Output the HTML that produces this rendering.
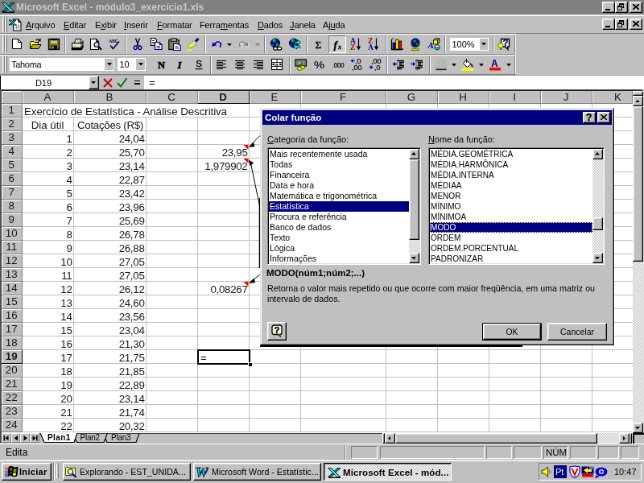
<!DOCTYPE html>
<html lang="pt-BR"><head><meta charset="utf-8"><title>Microsoft Excel - módulo3_exercício1.xls</title>
<style>
html,body{margin:0;padding:0;background:#c0c0c0;overflow:hidden}
body{width:644px;height:483px;position:relative}
#r{position:absolute;left:0;top:0;width:800px;height:600px;transform:scale(.805);transform-origin:0 0;will-change:transform;background:#c0c0c0;overflow:hidden;font:11px "Liberation Sans",sans-serif;color:#000}
#r div,#r span,#r svg{position:absolute;box-sizing:border-box;white-space:nowrap}
#r u{text-decoration:underline}
.t{line-height:13px;height:13px}
.b{font-weight:bold}
.rb{background:#c0c0c0;border:1px solid;border-color:#fff #000 #000 #fff;box-shadow:inset -1px -1px #808080,inset 1px 1px #dfdfdf}
.rb2{background:#c0c0c0;border:1px solid;border-color:#dfdfdf #000 #000 #dfdfdf;box-shadow:inset -1px -1px #808080,inset 1px 1px #fff}
.sk{border:1px solid;border-color:#808080 #fff #fff #808080;box-shadow:inset 1px 1px #000,inset -1px -1px #dfdfdf}
.sk1{border:1px solid;border-color:#808080 #fff #fff #808080}
.pr{background:#c0c0c0;border:1px solid;border-color:#000 #fff #fff #000;box-shadow:inset 1px 1px #808080,inset -1px -1px #dfdfdf}
.dz{background:repeating-conic-gradient(#fff 0 25%,#c0c0c0 0 50%) 0 0/2px 2px}
.vs{width:2px;background:#808080;border-right:1px solid #fff}
.gr{width:3px;border-left:1px solid #fff;border-right:1px solid #808080;background:#c0c0c0}
.hd{background:#c0c0c0;border-right:1px solid #808080;border-bottom:1px solid #808080;box-shadow:inset 1px 1px #fff;text-align:center;font-size:13.33px;line-height:16px;color:#181818}
.c{font-size:13.33px;line-height:17px;height:17px;color:#181818;margin-top:0.5px}
.cr{text-align:right;letter-spacing:-0.3px}
.li{left:1px;height:13px;line-height:13px;font-size:11.5px}
.sel{background:#000080;color:#fff}
</style></head>
<body>
<div id="r">
<div style="left:0px;top:0px;width:800px;height:18px;background:#808080"></div>
<svg style="left:2px;top:1px" width="16" height="16" viewBox="0 0 16 16"><path d="M12,2.5 L16,2.5 Q9,8 5,13.5 L0.5,13.5 Q7,8 12,2.5 Z" stroke="#000" stroke-width="0.8" fill="#009090" /><path d="M0.5,2.5 L5,2.5 Q9,8 16,13.5 L11.5,13.5 Q6,8 0.5,2.5 Z" stroke="#000" stroke-width="0.8" fill="#00d8d8" /><path d="M2.5,3.3 Q7,8 12.5,12.6" stroke="#c0ffff" stroke-width="0.9" fill="none" /><path d="M1,14.3 L16,14.3" stroke="#000" stroke-width="1.2" fill="none" /></svg>
<span class="t b" style="left:20px;top:2.5px;color:#c8c8c8;font-size:12px;letter-spacing:-0.04px">Microsoft Excel - módulo3_exercício1.xls</span>
<div class="rb" style="left:748px;top:2px;width:16px;height:14px;"><div style="left:3px;top:8px;width:6px;height:2px;background:#000"></div></div>
<div class="rb" style="left:764px;top:2px;width:16px;height:14px;"><div style="left:4px;top:1px;width:6px;height:6px;border:1px solid #000;border-top-width:2px"></div><div style="left:2px;top:4px;width:6px;height:6px;border:1px solid #000;border-top-width:2px;background:#c0c0c0"></div></div>
<div class="rb" style="left:782px;top:2px;width:16px;height:14px;"><svg style="left:3px;top:2px" width="8" height="7"><path d="M0,0 L8,7 M8,0 L0,7" stroke="#000" stroke-width="1.7" fill="none"/></svg></div>
<div style="left:0px;top:18px;width:800px;height:1px;background:#dfdfdf"></div>
<div style="left:0px;top:19px;width:800px;height:1px;background:#fff"></div>
<div class="gr" style="left:3px;top:21px;width:3px;height:19px;"></div>
<div class="gr" style="left:6px;top:21px;width:3px;height:19px;"></div>
<svg style="left:11px;top:23px" width="16" height="16" viewBox="0 0 16 16"><path d="M5.5,1 L11.5,1 L15,4.5 L15,15 L5.5,15 Z" stroke="#000" stroke-width="1.1" fill="#fff" /><path d="M11.5,1 L11.5,4.5 L15,4.5" stroke="#000" stroke-width="1" fill="none" /><path d="M7,9 H13.5 M7,11.5 H13.5 M9.5,7 V13.5 M12,7 V13.5" stroke="#909090" stroke-width="0.9" fill="none" /><path d="M15.6,5 V15.6 H6.5" stroke="#606060" stroke-width="0.9" fill="none" /><path d="M5.8,2 L9,2 Q5.5,5 3.2,8 L0,8 Q3.5,5 5.8,2 Z" stroke="#000" stroke-width="0.7" fill="#009090" /><path d="M0,2 L3.2,2 Q5.5,5 9,8 L5.8,8 Q3.5,5 0,2 Z" stroke="#000" stroke-width="0.7" fill="#00d8d8" /></svg>
<span class="t" style="left:32px;top:25px;letter-spacing:-0.12px"><u>A</u>rquivo</span>
<span class="t" style="left:79px;top:25px;letter-spacing:-0.12px"><u>E</u>ditar</span>
<span class="t" style="left:118px;top:25px;letter-spacing:-0.12px">E<u>x</u>ibir</span>
<span class="t" style="left:154px;top:25px;letter-spacing:-0.12px"><u>I</u>nserir</span>
<span class="t" style="left:195px;top:25px;letter-spacing:-0.12px"><u>F</u>ormatar</span>
<span class="t" style="left:248px;top:25px;letter-spacing:-0.12px">Ferra<u>m</u>entas</span>
<span class="t" style="left:320px;top:25px;letter-spacing:-0.12px"><u>D</u>ados</span>
<span class="t" style="left:360px;top:25px;letter-spacing:-0.12px"><u>J</u>anela</span>
<span class="t" style="left:401px;top:25px;letter-spacing:-0.12px">Aj<u>u</u>da</span>
<div class="rb" style="left:748px;top:23px;width:16px;height:14px;"><div style="left:3px;top:8px;width:6px;height:2px;background:#000"></div></div>
<div class="rb" style="left:764px;top:23px;width:16px;height:14px;"><div style="left:4px;top:1px;width:6px;height:6px;border:1px solid #000;border-top-width:2px"></div><div style="left:2px;top:4px;width:6px;height:6px;border:1px solid #000;border-top-width:2px;background:#c0c0c0"></div></div>
<div class="rb" style="left:782px;top:23px;width:16px;height:14px;"><svg style="left:3px;top:2px" width="8" height="7"><path d="M0,0 L8,7 M8,0 L0,7" stroke="#000" stroke-width="1.7" fill="none"/></svg></div>
<div style="left:0px;top:41px;width:800px;height:1px;background:#808080"></div>
<div style="left:0px;top:42px;width:641px;height:1px;background:#fff"></div>
<div class="gr" style="left:3px;top:44px;width:3px;height:21px;"></div>
<div class="gr" style="left:6px;top:44px;width:3px;height:21px;"></div>
<svg style="left:13px;top:47px" width="16" height="16" viewBox="0 0 16 16"><path d="M2.5,1.5 L9.5,1.5 L13.5,5.5 L13.5,13.5 L2.5,13.5 Z" stroke="#000" stroke-width="1" fill="#fff" /><path d="M9.5,1.5 L9.5,5.5 L13.5,5.5" stroke="#000" stroke-width="1" fill="none" /></svg>
<svg style="left:36px;top:47px" width="16" height="16" viewBox="0 0 16 16"><path d="M1.5,13.5 L1.5,5.5 L2.5,4.5 L5.5,4.5 L6.5,5.5 L11.5,5.5 L11.5,8.5" stroke="#000" stroke-width="1" fill="#ffff30" /><path d="M1.5,13.5 L4.5,8.5 L15,8.5 L12,13.5 Z" stroke="#000" stroke-width="1" fill="#b0b000" /><path d="M8.5,3 Q11,0.5 13.5,3 M14,0.8 L14,4 L10.8,4" stroke="#000" stroke-width="1.1" fill="none" /></svg>
<svg style="left:59px;top:47px" width="16" height="16" viewBox="0 0 16 16"><rect x="1.5" y="1.5" width="13" height="13" fill="#808000" stroke="#000" stroke-width="1.4"/><rect x="4" y="2" width="8" height="5" fill="#c0c0b0"/><rect x="4" y="2" width="8" height="1.2" fill="#000"/><rect x="4.5" y="9.5" width="7.5" height="5" fill="#000"/><rect x="5.5" y="10.5" width="2.2" height="3" fill="#b0b090"/></svg>
<svg style="left:88px;top:47px" width="16" height="16" viewBox="0 0 16 16"><path d="M4.5,6.5 L6,1.5 L13,1.5 L11.5,6.5 Z" stroke="#000" stroke-width="1" fill="#fff" /><path d="M7,3.2 H11.5 M6.5,4.8 H11" stroke="#808080" stroke-width="0.7" fill="none" /><path d="M1.5,6.5 L13,6.5 L15,4.5 L15,9.5 L13,12.5 L1.5,12.5 Z" stroke="#000" stroke-width="1.1" fill="#c8c8c8" /><path d="M13,6.5 L13,12.5" stroke="#000" stroke-width="1" fill="none" /><path d="M1.5,9 H13" stroke="#fff" stroke-width="0.8" fill="none" /><rect x="8.5" y="9.8" width="3" height="1.4" fill="#ffff00"/><path d="M1,12.8 L13.5,12.8 L15.5,10 L15.5,11.5 L13.5,15 L1,15 Z" stroke="#000" stroke-width="0.6" fill="#000" /></svg>
<svg style="left:111px;top:47px" width="16" height="16" viewBox="0 0 16 16"><path d="M1.5,1.5 L8.5,1.5 L11.5,4.5 L11.5,14.5 L1.5,14.5 Z" stroke="#000" stroke-width="1.1" fill="#fff" /><path d="M8.5,1.5 L8.5,4.5 L11.5,4.5" stroke="#000" stroke-width="1" fill="none" /><circle cx="9" cy="8.5" r="3" fill="#a0e8f0" stroke="#000" stroke-width="1.1"/><path d="M11.2,10.8 L15,14.8" stroke="#000" stroke-width="2.2" fill="none" /></svg>
<svg style="left:134px;top:47px" width="16" height="16" viewBox="0 0 16 16"><text x="1.5" y="6" font-family="Liberation Sans,sans-serif" font-size="6" font-weight="bold" fill="#000" textLength="11" lengthAdjust="spacingAndGlyphs">ABC</text><path d="M3,9.5 L6.5,13.5 L14,4.5" stroke="#000080" stroke-width="1.7" fill="none" /></svg>
<svg style="left:163px;top:47px" width="16" height="16" viewBox="0 0 16 16"><path d="M5.5,0.5 L9,10 M10.5,0.5 L7,10" stroke="#000" stroke-width="1.3" fill="none" /><ellipse cx="5.2" cy="12.3" rx="1.9" ry="2.3" fill="none" stroke="#0000a0" stroke-width="1.4"/><ellipse cx="10.8" cy="12.3" rx="1.9" ry="2.3" fill="none" stroke="#0000a0" stroke-width="1.4"/></svg>
<svg style="left:186px;top:47px" width="16" height="16" viewBox="0 0 16 16"><path d="M1.5,0.5 L6.5,0.5 L8.5,2.5 L8.5,9.5 L1.5,9.5 Z" stroke="#000" stroke-width="1.1" fill="#fff" /><path d="M3,3.5 H6 M3,5.5 H7 M3,7.5 H7" stroke="#000" stroke-width="0.8" fill="none" /><path d="M6.5,5.5 L12,5.5 L15,8.5 L15,14.5 L6.5,14.5 Z" stroke="#000080" stroke-width="1.2" fill="#fff" /><path d="M12,5.5 L12,8.5 L15,8.5" stroke="#000080" stroke-width="1" fill="none" /><path d="M8.5,10.5 H13 M8.5,12.5 H13" stroke="#000080" stroke-width="0.9" fill="none" /></svg>
<svg style="left:209px;top:47px" width="16" height="16" viewBox="0 0 16 16"><rect x="0.8" y="2.5" width="12.4" height="12" fill="#808050" stroke="#000" stroke-width="1.2"/><rect x="3.5" y="1" width="7" height="3.2" fill="#c0c0c0" stroke="#000" stroke-width="1"/><rect x="5.5" y="0.2" width="3" height="1.5" fill="#404040"/><path d="M6.5,7.5 L12,7.5 L15.3,10 L15.3,15.5 L6.5,15.5 Z" stroke="#000080" stroke-width="1.2" fill="#fff" /><path d="M8.5,11 H12 M8.5,13 H13.5" stroke="#000080" stroke-width="0.9" fill="none" /></svg>
<svg style="left:232px;top:47px" width="16" height="16" viewBox="0 0 16 16"><path d="M11,4.5 L14.5,0.8" stroke="#000060" stroke-width="3" fill="none" /><path d="M8,3.5 L12.5,8 L10.5,9.5 L6.5,5.5 Z" stroke="#606060" stroke-width="0.8" fill="#fff" /><path d="M6.5,5.5 L10.5,9.5 L4,13 L1.5,10 Z" stroke="#808000" stroke-width="0.7" fill="#ffff40" /><path d="M3.5,9.5 L6,12 M5,8 L8,11" stroke="#c0c000" stroke-width="0.7" fill="none" /><path d="M1,15 H6" stroke="#ffff00" stroke-width="1.4" fill="none" /></svg>
<svg style="left:261px;top:47px" width="16" height="16" viewBox="0 0 16 16"><path d="M5.5,8.5 Q7,4.8 10,5 Q13.5,5.5 13.3,8.5 Q13.2,10.5 12,11.5" stroke="#0000c0" stroke-width="1.7" fill="none" /><polygon points="2,10.8 3.5,5.2 8.2,9.2" fill="#0000c0"/></svg>
<svg style="left:295px;top:47px" width="16" height="16" viewBox="0 0 16 16"><path d="M11.5,9.5 Q10,5.8 7,6 Q3.5,6.5 3.7,9.5 Q3.8,11.5 5,12.5" stroke="#fff" stroke-width="1.7" fill="none" /><polygon points="15,11.8 13.5,6.2 8.8,10.2" fill="#fff"/><path d="M10.5,8.5 Q9,4.8 6,5 Q2.5,5.5 2.7,8.5 Q2.8,10.5 4,11.5" stroke="#808080" stroke-width="1.7" fill="none" /><polygon points="14,10.8 12.5,5.2 7.8,9.2" fill="#808080"/></svg>
<svg style="left:335px;top:47px" width="16" height="16" viewBox="0 0 16 16"><circle cx="7" cy="6.5" r="5.6" fill="#0000c0" stroke="#000" stroke-width="0.9"/><path d="M4,2.5 Q7,1 8.5,3 Q7,5.5 5,6 Q3,5.5 4,2.5 Z M7.5,7 Q10.5,6 11.5,8 Q10,11.5 8,11 Z M2,7.5 Q4,7.5 4.5,10 Q3,10.5 2,7.5 Z" stroke="none" stroke-width="0" fill="#00b000" /><path d="M3.5,3 Q5,1.8 6.5,2" stroke="#80c0ff" stroke-width="0.8" fill="none" /><ellipse cx="7.5" cy="13.2" rx="2.8" ry="1.9" fill="#fff" stroke="#000" stroke-width="1.2"/><ellipse cx="12" cy="13.2" rx="2.8" ry="1.9" fill="#fff" stroke="#000" stroke-width="1.2"/></svg>
<svg style="left:358px;top:47px" width="16" height="16" viewBox="0 0 16 16"><circle cx="7" cy="6.5" r="5.6" fill="#0000c0" stroke="#000" stroke-width="0.9"/><path d="M4,2.5 Q7,1 8.5,3 Q7,5.5 5,6 Q3,5.5 4,2.5 Z M7.5,7 Q10.5,6 11.5,8 Q10,11.5 8,11 Z M2,7.5 Q4,7.5 4.5,10 Q3,10.5 2,7.5 Z" stroke="none" stroke-width="0" fill="#00b000" /><path d="M3.5,3 Q5,1.8 6.5,2" stroke="#80c0ff" stroke-width="0.8" fill="none" /><polygon points="16,5.5 12,2.5 12,4.3 8.5,4.3 8.5,6.7 12,6.7 12,8.5" fill="#00ffff" stroke="#000" stroke-width="0.7"/><polygon points="6.5,11 10.5,8 10.5,9.8 14.5,9.8 14.5,12.2 10.5,12.2 10.5,14" fill="#00ffff" stroke="#000" stroke-width="0.7"/></svg>
<svg style="left:388px;top:47px" width="16" height="16" viewBox="0 0 16 16"><text x="3.5" y="13" font-family="Liberation Serif,sans-serif" font-size="13.5" font-weight="normal" fill="#000" stroke="#000" stroke-width="0.3">Σ</text></svg>
<svg style="left:434px;top:47px" width="16" height="16" viewBox="0 0 16 16"><text x="1" y="7.2" font-family="Liberation Serif,sans-serif" font-size="9.5" font-weight="bold" fill="#0000a0" >A</text><text x="1" y="15.2" font-family="Liberation Serif,sans-serif" font-size="9.5" font-weight="bold" fill="#b00000" >Z</text><path d="M11.5,0.5 V13" stroke="#000" stroke-width="1.2" fill="none" /><polygon points="8.7,10.5 14.3,10.5 11.5,15.5" fill="#000"/></svg>
<svg style="left:456px;top:47px" width="16" height="16" viewBox="0 0 16 16"><text x="1" y="7.2" font-family="Liberation Serif,sans-serif" font-size="9.5" font-weight="bold" fill="#b00000" >Z</text><text x="1" y="15.2" font-family="Liberation Serif,sans-serif" font-size="9.5" font-weight="bold" fill="#0000a0" >A</text><path d="M11.5,0.5 V13" stroke="#000" stroke-width="1.2" fill="none" /><polygon points="8.7,10.5 14.3,10.5 11.5,15.5" fill="#000"/></svg>
<svg style="left:485px;top:47px" width="16" height="16" viewBox="0 0 16 16"><path d="M1.5,2 V14.5 H15.5" stroke="#000" stroke-width="1.2" fill="none" /><path d="M1.5,2 L3.5,0.8 M15.5,14.5 L15.5,13" stroke="#000" stroke-width="1" fill="none" /><rect x="3" y="6" width="3.2" height="8" fill="#0000ff" stroke="#000" stroke-width="0.8"/><rect x="6.7" y="2" width="3.2" height="12" fill="#ffff00" stroke="#000" stroke-width="0.8"/><rect x="10.5" y="4" width="3.2" height="10" fill="#ff0000" stroke="#000" stroke-width="0.8"/><path d="M1,15.5 H14" stroke="#808080" stroke-width="1" fill="none" /></svg>
<svg style="left:508px;top:47px" width="16" height="16" viewBox="0 0 16 16"><circle cx="8" cy="6" r="5.2" fill="#0000c0" stroke="#000" stroke-width="0.8"/><path d="M5.5,3 Q8,1.5 9.5,3.5 Q8,5.5 6,6 Q4.5,5 5.5,3 Z M8.5,6.5 Q11,6 12,7.5 Q10.5,10 9,9.5 Z" stroke="none" stroke-width="0" fill="#00a000" /><path d="M2.5,5 Q2,12 8,12 Q14,12 13.5,5" stroke="#808000" stroke-width="1.3" fill="none" /><rect x="7" y="12" width="2" height="2.2" fill="#808000"/><rect x="3.8" y="13.8" width="8.4" height="1.8" fill="#e8e800" stroke="#606000" stroke-width="0.8"/></svg>
<svg style="left:531px;top:47px" width="16" height="16" viewBox="0 0 16 16"><text x="0.5" y="13" font-family="Liberation Serif,sans-serif" font-size="11" font-weight="bold" fill="#000080" font-style="italic">A</text><path d="M7.5,2.8 L12.5,2.8 L12.5,8 L7.5,8 Z" stroke="#000" stroke-width="0.9" fill="#ffff00" /><path d="M7.5,2.8 L9.5,0.8 L14.8,0.8 L12.5,2.8 M14.8,0.8 L14.8,6 L12.5,8" stroke="#000" stroke-width="0.9" fill="#a0a000" /><path d="M9,10.5 L9,13.5 Q12,16.5 15,13.5 L15,10.5 Z" stroke="#000" stroke-width="0.8" fill="#00e0e0" /><ellipse cx="12" cy="10.5" rx="3" ry="1.6" fill="#e0ffff" stroke="#000" stroke-width="0.8"/></svg>
<div class="vs" style="left:80px;top:44px;width:2px;height:22px;"></div>
<div class="vs" style="left:155px;top:44px;width:2px;height:22px;"></div>
<div class="vs" style="left:254px;top:44px;width:2px;height:22px;"></div>
<div class="vs" style="left:328px;top:44px;width:2px;height:22px;"></div>
<div class="vs" style="left:380px;top:44px;width:2px;height:22px;"></div>
<div class="vs" style="left:479px;top:44px;width:2px;height:22px;"></div>
<div class="vs" style="left:552px;top:44px;width:2px;height:22px;"></div>
<div class="vs" style="left:612px;top:44px;width:2px;height:22px;"></div>
<svg style="left:281.5px;top:53.5px" width="6.0" height="3.5"><polygon points="0,0 6.0,0 3.0,3.5" fill="#000"/></svg>
<svg style="left:316.5px;top:53.5px" width="6.0" height="3.5"><polygon points="0,0 6.0,0 3.0,3.5" fill="#808080"/></svg>
<div style="left:408px;top:44px;width:22px;height:22px;background:#d0d0d0;border:1px solid;border-color:#808080 #fff #fff #808080"></div>
<svg style="left:412px;top:48px" width="16" height="16" viewBox="0 0 16 16"><text x="2.5" y="12" font-family="Liberation Serif,sans-serif" font-size="13.5" font-weight="bold" fill="#000" font-style="italic" stroke="#000" stroke-width="0.3">f</text><text x="8" y="12.5" font-family="Liberation Serif,sans-serif" font-size="8.5" font-weight="bold" fill="#000" font-style="italic" stroke="#000" stroke-width="0.3">x</text></svg>
<div style="left:559px;top:47px;width:47.5px;height:16px;background:#fff"></div>
<span class="t" style="left:561.5px;top:48.5px;">100%</span>
<div style="left:595.5px;top:48px;width:10px;height:14px;background:#c0c0c0"></div>
<svg style="left:597.5px;top:53px" width="6.0" height="3.5"><polygon points="0,0 6.0,0 3.0,3.5" fill="#000"/></svg>
<svg style="left:618px;top:47px" width="16" height="16" viewBox="0 0 16 16"><path d="M4.5,1.5 L14.5,1.5 L14.5,11 L12.5,11 L13,14.5 L9.5,11 L4.5,11 Z" stroke="#000" stroke-width="1.4" fill="#ffffd0" /><text x="6.5" y="10.2" font-family="Liberation Sans,sans-serif" font-size="11.5" font-weight="bold" fill="#0000c0" stroke="#0000c0" stroke-width="0.4">?</text><circle cx="4" cy="9.5" r="3" fill="#ffff00" stroke="#606000" stroke-width="0.9"/><rect x="3" y="12.3" width="2.4" height="2.7" fill="#606060"/></svg>
<div style="left:638.5px;top:43px;width:1px;height:25px;background:#808080"></div>
<div style="left:639.5px;top:43px;width:1px;height:25px;background:#fff"></div>
<div style="left:0px;top:67px;width:640px;height:1px;background:#808080"></div>
<div style="left:0px;top:68px;width:640px;height:1px;background:#fff"></div>
<div class="gr" style="left:3px;top:70px;width:3px;height:21px;"></div>
<div class="gr" style="left:6px;top:70px;width:3px;height:21px;"></div>
<div style="left:11.5px;top:72px;width:130.5px;height:16px;background:#fff"></div>
<span class="t" style="left:14px;top:73.5px;letter-spacing:-0.3px">Tahoma</span>
<div style="left:130px;top:73px;width:11px;height:14px;background:#c0c0c0"></div>
<svg style="left:132.5px;top:78px" width="6.0" height="3.5"><polygon points="0,0 6.0,0 3.0,3.5" fill="#000"/></svg>
<div style="left:146px;top:72px;width:35px;height:16px;background:#fff"></div>
<span class="t" style="left:148.5px;top:73.5px;">10</span>
<div style="left:169px;top:73px;width:11px;height:14px;background:#c0c0c0"></div>
<svg style="left:171.5px;top:78px" width="6.0" height="3.5"><polygon points="0,0 6.0,0 3.0,3.5" fill="#000"/></svg>
<svg style="left:193px;top:71.5px" width="16" height="16" viewBox="0 0 16 16"><text x="3" y="13" font-family="Liberation Serif,sans-serif" font-size="12.5" font-weight="bold" fill="#000" stroke="#000" stroke-width="0.7">N</text></svg>
<svg style="left:216px;top:71.5px" width="16" height="16" viewBox="0 0 16 16"><text x="4.5" y="13" font-family="Liberation Serif,sans-serif" font-size="13" font-weight="bold" fill="#000" font-style="italic" stroke="#000" stroke-width="0.5">I</text></svg>
<svg style="left:239px;top:71.5px" width="16" height="16" viewBox="0 0 16 16"><text x="4.3" y="11.3" font-family="Liberation Sans,sans-serif" font-size="11.5" font-weight="normal" fill="#000" stroke="#000" stroke-width="0.35">S</text><path d="M3.5,13.6 H12.5" stroke="#000" stroke-width="1.2" fill="none" /></svg>
<svg style="left:267px;top:71.5px" width="16" height="16" viewBox="0 0 16 16"><path d="M2,3.5 H14" stroke="#000" stroke-width="1.1" fill="none" /><path d="M2,5.5 H10" stroke="#000" stroke-width="1.1" fill="none" /><path d="M2,7.5 H14" stroke="#000" stroke-width="1.1" fill="none" /><path d="M2,9.5 H10" stroke="#000" stroke-width="1.1" fill="none" /><path d="M2,11.5 H14" stroke="#000" stroke-width="1.1" fill="none" /><path d="M2,13.5 H10" stroke="#000" stroke-width="1.1" fill="none" /></svg>
<svg style="left:290px;top:71.5px" width="16" height="16" viewBox="0 0 16 16"><path d="M2,3.5 H14" stroke="#000" stroke-width="1.1" fill="none" /><path d="M4,5.5 H12" stroke="#000" stroke-width="1.1" fill="none" /><path d="M2,7.5 H14" stroke="#000" stroke-width="1.1" fill="none" /><path d="M4,9.5 H12" stroke="#000" stroke-width="1.1" fill="none" /><path d="M2,11.5 H14" stroke="#000" stroke-width="1.1" fill="none" /><path d="M4,13.5 H12" stroke="#000" stroke-width="1.1" fill="none" /></svg>
<svg style="left:313px;top:71.5px" width="16" height="16" viewBox="0 0 16 16"><path d="M2,3.5 H14" stroke="#000" stroke-width="1.1" fill="none" /><path d="M6,5.5 H14" stroke="#000" stroke-width="1.1" fill="none" /><path d="M2,7.5 H14" stroke="#000" stroke-width="1.1" fill="none" /><path d="M6,9.5 H14" stroke="#000" stroke-width="1.1" fill="none" /><path d="M2,11.5 H14" stroke="#000" stroke-width="1.1" fill="none" /><path d="M6,13.5 H14" stroke="#000" stroke-width="1.1" fill="none" /></svg>
<svg style="left:336px;top:71.5px" width="16" height="16" viewBox="0 0 16 16"><rect x="1.5" y="1.5" width="13" height="13" fill="#fff" stroke="#000" stroke-width="1.1"/><path d="M1.5,5.5 H14.5 M1.5,10.5 H14.5 M8,1.5 V5.5 M8,10.5 V14.5" stroke="#000" stroke-width="0.9" fill="none" /><text x="6" y="10" font-family="Liberation Sans,sans-serif" font-size="6" font-weight="bold" fill="#000" >a</text><path d="M2.5,8 H5.5 M10.5,8 H13.5" stroke="#000" stroke-width="1" fill="none" /><polygon points="2,8 4.5,6.2 4.5,9.8" fill="#000"/><polygon points="14,8 11.5,6.2 11.5,9.8" fill="#000"/></svg>
<svg style="left:366px;top:71.5px" width="16" height="16" viewBox="0 0 16 16"><rect x="1" y="2" width="13.5" height="8" fill="#609070" stroke="#000" stroke-width="1.2"/><ellipse cx="7.8" cy="6" rx="3.6" ry="3" fill="#f0fff0" stroke="#104020" stroke-width="0.6"/><text x="5.8" y="8.8" font-family="Liberation Sans,sans-serif" font-size="8" font-weight="bold" fill="#000" >9</text><ellipse cx="9.8" cy="11.6" rx="3.1" ry="2.1" fill="#f0f000" stroke="#404000" stroke-width="0.9"/><ellipse cx="6.2" cy="13.2" rx="3.1" ry="2.1" fill="#f0f000" stroke="#404000" stroke-width="0.9"/></svg>
<svg style="left:389px;top:71.5px" width="16" height="16" viewBox="0 0 16 16"><text x="1" y="13" font-family="Liberation Sans,sans-serif" font-size="13.5" font-weight="normal" fill="#000" textLength="13" lengthAdjust="spacingAndGlyphs" stroke="#000" stroke-width="0.15">%</text></svg>
<svg style="left:412px;top:71.5px" width="16" height="16" viewBox="0 0 16 16"><text x="0.5" y="12" font-family="Liberation Sans,sans-serif" font-size="9" font-weight="normal" fill="#000" textLength="15" lengthAdjust="spacingAndGlyphs" stroke="#000" stroke-width="0.25">.000</text></svg>
<svg style="left:435px;top:71.5px" width="16" height="16" viewBox="0 0 16 16"><text x="6" y="7.2" font-family="Liberation Sans,sans-serif" font-size="9" font-weight="normal" fill="#000" stroke="#000" stroke-width="0.2">,0</text><text x="2" y="15.2" font-family="Liberation Sans,sans-serif" font-size="9" font-weight="normal" fill="#000" textLength="12.5" lengthAdjust="spacingAndGlyphs" stroke="#000" stroke-width="0.2">,00</text><path d="M2.5,3.5 H5.5" stroke="#0000c0" stroke-width="1.2" fill="none" /><polygon points="0.5,3.5 3.5,1 3.5,6" fill="#0000c0"/></svg>
<svg style="left:458px;top:71.5px" width="16" height="16" viewBox="0 0 16 16"><text x="3" y="7.2" font-family="Liberation Sans,sans-serif" font-size="9" font-weight="normal" fill="#000" textLength="12.5" lengthAdjust="spacingAndGlyphs" stroke="#000" stroke-width="0.2">,00</text><text x="7" y="15.2" font-family="Liberation Sans,sans-serif" font-size="9" font-weight="normal" fill="#000" stroke="#000" stroke-width="0.2">,0</text><path d="M0.5,11.5 H3.5" stroke="#0000c0" stroke-width="1.2" fill="none" /><polygon points="5.5,11.5 2.5,9 2.5,14" fill="#0000c0"/></svg>
<svg style="left:487px;top:71.5px" width="16" height="16" viewBox="0 0 16 16"><path d="M6,3.5 H15 M9,5.5 H15 M9,7.5 H13 M9,9.5 H15 M6,11.5 H15 M6,13.5 H12" stroke="#000" stroke-width="1.35" fill="none" /><path d="M7.5,1 V15.5" stroke="#404040" stroke-width="0.7" fill="none" stroke-dasharray="1 1"/><path d="M3,7.5 H6.5" stroke="#0000c0" stroke-width="1.4" fill="none" /><polygon points="0.5,7.5 4,4.8 4,10.2" fill="#0000c0"/></svg>
<svg style="left:510px;top:71.5px" width="16" height="16" viewBox="0 0 16 16"><path d="M6,3.5 H15 M9,5.5 H15 M9,7.5 H13 M9,9.5 H15 M6,11.5 H15 M6,13.5 H12" stroke="#000" stroke-width="1.35" fill="none" /><path d="M7.5,1 V15.5" stroke="#404040" stroke-width="0.7" fill="none" stroke-dasharray="1 1"/><path d="M0.5,7.5 H4" stroke="#0000c0" stroke-width="1.4" fill="none" /><polygon points="6.5,7.5 3,4.8 3,10.2" fill="#0000c0"/></svg>
<svg style="left:540px;top:71.5px" width="16" height="16" viewBox="0 0 16 16"><path d="M2,2 H14 M2,6 H14 M2,10 H14 M2,2 V13 M6,2 V13 M10,2 V13 M14,2 V13" stroke="#909090" stroke-width="0.8" fill="none" stroke-dasharray="1 1"/><path d="M1.5,14.3 H14.5" stroke="#202020" stroke-width="1.7" fill="none" /></svg>
<svg style="left:573px;top:71.5px" width="16" height="16" viewBox="0 0 16 16"><path d="M6,2.5 L12,7.5 L7.5,11.5 L2.5,6.5 Z" stroke="#000" stroke-width="1" fill="#fff" /><path d="M6.5,1 V6" stroke="#000" stroke-width="1" fill="none" /><path d="M12,7.5 Q14.5,8 14,11.5 Q12.5,10 12,7.5 Z" stroke="#000080" stroke-width="0.8" fill="#0000c0" /><rect x="1" y="12.5" width="14" height="3.5" fill="#ffff00"/></svg>
<svg style="left:607px;top:71.5px" width="16" height="16" viewBox="0 0 16 16"><text x="3" y="10.5" font-family="Liberation Sans,sans-serif" font-size="12" font-weight="bold" fill="#000080" >A</text><rect x="1" y="12" width="14" height="3.5" fill="#ff0000"/></svg>
<div class="vs" style="left:261px;top:69.5px;width:2px;height:22px;"></div>
<div class="vs" style="left:359px;top:69.5px;width:2px;height:22px;"></div>
<div class="vs" style="left:480px;top:69.5px;width:2px;height:22px;"></div>
<div class="vs" style="left:533px;top:69.5px;width:2px;height:22px;"></div>
<svg style="left:560.5px;top:79px" width="6.0" height="3.5"><polygon points="0,0 6.0,0 3.0,3.5" fill="#000"/></svg>
<svg style="left:594.5px;top:79px" width="6.0" height="3.5"><polygon points="0,0 6.0,0 3.0,3.5" fill="#000"/></svg>
<svg style="left:628.5px;top:79px" width="6.0" height="3.5"><polygon points="0,0 6.0,0 3.0,3.5" fill="#000"/></svg>
<div style="left:638.5px;top:69px;width:1px;height:24px;background:#808080"></div>
<div style="left:639.5px;top:69px;width:1px;height:24px;background:#fff"></div>
<div style="left:0px;top:92px;width:641px;height:1px;background:#808080"></div>
<div style="left:0px;top:93px;width:800px;height:1px;background:#a0a0a0"></div>
<div style="left:0px;top:94px;width:122px;height:17px;background:#fff;border-left:1.5px solid #000"></div>
<span class="t" style="left:1px;top:96.5px;width:106px;text-align:center">D19</span>
<div class="rb" style="left:109.5px;top:94px;width:13px;height:17px;"></div>
<svg style="left:113px;top:101px" width="6.0" height="3.5"><polygon points="0,0 6.0,0 3.0,3.5" fill="#000"/></svg>
<svg style="left:128px;top:97px" width="12" height="12"><path d="M1,1 L11,11 M11,1 L1,11" stroke="#b00000" stroke-width="1.9" fill="none"/></svg>
<svg style="left:145px;top:96px" width="14" height="13"><path d="M1,7 L5,11.5 L12.5,1" stroke="#008000" stroke-width="1.9" fill="none"/></svg>
<div style="left:166.5px;top:99.5px;width:7.5px;height:1.7px;background:#000"></div>
<div style="left:166.5px;top:103px;width:7.5px;height:1.7px;background:#000"></div>
<div style="left:178.5px;top:94px;width:622px;height:17px;background:#fff"></div>
<span class="t" style="left:185px;top:95px;font-size:13.33px;line-height:15px">=</span>
<div style="left:0px;top:111px;width:798px;height:2px;background:#202020;border-top:1px solid #505050"></div>
<div style="left:0px;top:113px;width:786px;height:425px;background:#fff"></div>
<div style="left:0px;top:112px;width:2px;height:438.5px;background:#505050"></div>
<div style="left:90.5px;top:129px;width:1px;height:408px;background:#c0c0c0"></div>
<div style="left:180.5px;top:129px;width:1px;height:408px;background:#c0c0c0"></div>
<div style="left:244.5px;top:129px;width:1px;height:408px;background:#c0c0c0"></div>
<div style="left:308.5px;top:129px;width:1px;height:408px;background:#c0c0c0"></div>
<div style="left:372.5px;top:129px;width:1px;height:408px;background:#c0c0c0"></div>
<div style="left:478.5px;top:129px;width:1px;height:408px;background:#c0c0c0"></div>
<div style="left:542.5px;top:129px;width:1px;height:408px;background:#c0c0c0"></div>
<div style="left:606.5px;top:129px;width:1px;height:408px;background:#c0c0c0"></div>
<div style="left:670.5px;top:129px;width:1px;height:408px;background:#c0c0c0"></div>
<div style="left:734.5px;top:129px;width:1px;height:408px;background:#c0c0c0"></div>
<div style="left:27.5px;top:145px;width:758.5px;height:1px;background:#c0c0c0"></div>
<div style="left:27.5px;top:162px;width:758.5px;height:1px;background:#c0c0c0"></div>
<div style="left:27.5px;top:179px;width:758.5px;height:1px;background:#c0c0c0"></div>
<div style="left:27.5px;top:196px;width:758.5px;height:1px;background:#c0c0c0"></div>
<div style="left:27.5px;top:213px;width:758.5px;height:1px;background:#c0c0c0"></div>
<div style="left:27.5px;top:230px;width:758.5px;height:1px;background:#c0c0c0"></div>
<div style="left:27.5px;top:247px;width:758.5px;height:1px;background:#c0c0c0"></div>
<div style="left:27.5px;top:264px;width:758.5px;height:1px;background:#c0c0c0"></div>
<div style="left:27.5px;top:281px;width:758.5px;height:1px;background:#c0c0c0"></div>
<div style="left:27.5px;top:298px;width:758.5px;height:1px;background:#c0c0c0"></div>
<div style="left:27.5px;top:315px;width:758.5px;height:1px;background:#c0c0c0"></div>
<div style="left:27.5px;top:332px;width:758.5px;height:1px;background:#c0c0c0"></div>
<div style="left:27.5px;top:349px;width:758.5px;height:1px;background:#c0c0c0"></div>
<div style="left:27.5px;top:366px;width:758.5px;height:1px;background:#c0c0c0"></div>
<div style="left:27.5px;top:383px;width:758.5px;height:1px;background:#c0c0c0"></div>
<div style="left:27.5px;top:400px;width:758.5px;height:1px;background:#c0c0c0"></div>
<div style="left:27.5px;top:417px;width:758.5px;height:1px;background:#c0c0c0"></div>
<div style="left:27.5px;top:434px;width:758.5px;height:1px;background:#c0c0c0"></div>
<div style="left:27.5px;top:451px;width:758.5px;height:1px;background:#c0c0c0"></div>
<div style="left:27.5px;top:468px;width:758.5px;height:1px;background:#c0c0c0"></div>
<div style="left:27.5px;top:485px;width:758.5px;height:1px;background:#c0c0c0"></div>
<div style="left:27.5px;top:502px;width:758.5px;height:1px;background:#c0c0c0"></div>
<div style="left:27.5px;top:519px;width:758.5px;height:1px;background:#c0c0c0"></div>
<div style="left:27.5px;top:536px;width:758.5px;height:1px;background:#c0c0c0"></div>
<div class="hd" style="left:2px;top:113px;width:25.5px;height:16px;"></div>
<div class="hd" style="left:27.5px;top:113px;width:64.0px;height:16px;box-shadow:inset 1px 0 #fff">A</div>
<div class="hd" style="left:91.5px;top:113px;width:90.0px;height:16px;box-shadow:inset 1px 0 #fff">B</div>
<div class="hd" style="left:181.5px;top:113px;width:64.0px;height:16px;box-shadow:inset 1px 0 #fff">C</div>
<div class="hd b" style="left:245.5px;top:113px;width:64.0px;height:16px;box-shadow:inset 1px 0 #fff;border-color:#000">D</div>
<div class="hd" style="left:309.5px;top:113px;width:64.0px;height:16px;box-shadow:inset 1px 0 #fff">E</div>
<div class="hd" style="left:373.5px;top:113px;width:106.0px;height:16px;box-shadow:inset 1px 0 #fff">F</div>
<div class="hd" style="left:479.5px;top:113px;width:64.0px;height:16px;box-shadow:inset 1px 0 #fff">G</div>
<div class="hd" style="left:543.5px;top:113px;width:64.0px;height:16px;box-shadow:inset 1px 0 #fff">H</div>
<div class="hd" style="left:607.5px;top:113px;width:64.0px;height:16px;box-shadow:inset 1px 0 #fff">I</div>
<div class="hd" style="left:671.5px;top:113px;width:64.0px;height:16px;box-shadow:inset 1px 0 #fff">J</div>
<div class="hd" style="left:735.5px;top:113px;width:50.5px;height:16px;box-shadow:inset 1px 0 #fff;overflow:hidden"><span style="left:0;top:0;width:64px;text-align:center">K</span></div>
<div class="hd" style="left:2px;top:129px;width:25.5px;height:17px;line-height:16.5px">1</div>
<div class="hd" style="left:2px;top:146px;width:25.5px;height:17px;line-height:16.5px">2</div>
<div class="hd" style="left:2px;top:163px;width:25.5px;height:17px;line-height:16.5px">3</div>
<div class="hd" style="left:2px;top:180px;width:25.5px;height:17px;line-height:16.5px">4</div>
<div class="hd" style="left:2px;top:197px;width:25.5px;height:17px;line-height:16.5px">5</div>
<div class="hd" style="left:2px;top:214px;width:25.5px;height:17px;line-height:16.5px">6</div>
<div class="hd" style="left:2px;top:231px;width:25.5px;height:17px;line-height:16.5px">7</div>
<div class="hd" style="left:2px;top:248px;width:25.5px;height:17px;line-height:16.5px">8</div>
<div class="hd" style="left:2px;top:265px;width:25.5px;height:17px;line-height:16.5px">9</div>
<div class="hd" style="left:2px;top:282px;width:25.5px;height:17px;line-height:16.5px">10</div>
<div class="hd" style="left:2px;top:299px;width:25.5px;height:17px;line-height:16.5px">11</div>
<div class="hd" style="left:2px;top:316px;width:25.5px;height:17px;line-height:16.5px">12</div>
<div class="hd" style="left:2px;top:333px;width:25.5px;height:17px;line-height:16.5px">13</div>
<div class="hd" style="left:2px;top:350px;width:25.5px;height:17px;line-height:16.5px">14</div>
<div class="hd" style="left:2px;top:367px;width:25.5px;height:17px;line-height:16.5px">15</div>
<div class="hd" style="left:2px;top:384px;width:25.5px;height:17px;line-height:16.5px">16</div>
<div class="hd" style="left:2px;top:401px;width:25.5px;height:17px;line-height:16.5px">17</div>
<div class="hd" style="left:2px;top:418px;width:25.5px;height:17px;line-height:16.5px">18</div>
<div class="hd b" style="left:2px;top:435px;width:25.5px;height:17px;line-height:16.5px;border-color:#000">19</div>
<div class="hd" style="left:2px;top:452px;width:25.5px;height:17px;line-height:16.5px">20</div>
<div class="hd" style="left:2px;top:469px;width:25.5px;height:17px;line-height:16.5px">21</div>
<div class="hd" style="left:2px;top:486px;width:25.5px;height:17px;line-height:16.5px">22</div>
<div class="hd" style="left:2px;top:503px;width:25.5px;height:17px;line-height:16.5px">23</div>
<div class="hd" style="left:2px;top:520px;width:25.5px;height:17px;line-height:16.5px">24</div>
<div style="left:27.5px;top:129px;width:260px;height:16px;background:#fff"></div>
<span class="c" style="left:30px;top:129px;letter-spacing:-0.08px">Exercício de Estatística - Análise Descritiva</span>
<span class="c" style="left:28px;top:146px;width:62px;text-align:center">Dia útil</span>
<span class="c" style="left:92px;top:146px;width:90px;text-align:center;letter-spacing:-0.3px">Cotações (R$)</span>
<span class="c cr" style="left:28px;top:163px;width:61.5px;">1</span>
<span class="c cr" style="left:92px;top:163px;width:87.5px;">24,04</span>
<span class="c cr" style="left:28px;top:180px;width:61.5px;">2</span>
<span class="c cr" style="left:92px;top:180px;width:87.5px;">25,70</span>
<span class="c cr" style="left:28px;top:197px;width:61.5px;">3</span>
<span class="c cr" style="left:92px;top:197px;width:87.5px;">23,14</span>
<span class="c cr" style="left:28px;top:214px;width:61.5px;">4</span>
<span class="c cr" style="left:92px;top:214px;width:87.5px;">22,87</span>
<span class="c cr" style="left:28px;top:231px;width:61.5px;">5</span>
<span class="c cr" style="left:92px;top:231px;width:87.5px;">23,42</span>
<span class="c cr" style="left:28px;top:248px;width:61.5px;">6</span>
<span class="c cr" style="left:92px;top:248px;width:87.5px;">23,96</span>
<span class="c cr" style="left:28px;top:265px;width:61.5px;">7</span>
<span class="c cr" style="left:92px;top:265px;width:87.5px;">25,69</span>
<span class="c cr" style="left:28px;top:282px;width:61.5px;">8</span>
<span class="c cr" style="left:92px;top:282px;width:87.5px;">26,78</span>
<span class="c cr" style="left:28px;top:299px;width:61.5px;">9</span>
<span class="c cr" style="left:92px;top:299px;width:87.5px;">26,88</span>
<span class="c cr" style="left:28px;top:316px;width:61.5px;">10</span>
<span class="c cr" style="left:92px;top:316px;width:87.5px;">27,05</span>
<span class="c cr" style="left:28px;top:333px;width:61.5px;">11</span>
<span class="c cr" style="left:92px;top:333px;width:87.5px;">27,05</span>
<span class="c cr" style="left:28px;top:350px;width:61.5px;">12</span>
<span class="c cr" style="left:92px;top:350px;width:87.5px;">26,12</span>
<span class="c cr" style="left:28px;top:367px;width:61.5px;">13</span>
<span class="c cr" style="left:92px;top:367px;width:87.5px;">24,60</span>
<span class="c cr" style="left:28px;top:384px;width:61.5px;">14</span>
<span class="c cr" style="left:92px;top:384px;width:87.5px;">23,56</span>
<span class="c cr" style="left:28px;top:401px;width:61.5px;">15</span>
<span class="c cr" style="left:92px;top:401px;width:87.5px;">23,04</span>
<span class="c cr" style="left:28px;top:418px;width:61.5px;">16</span>
<span class="c cr" style="left:92px;top:418px;width:87.5px;">21,30</span>
<span class="c cr" style="left:28px;top:435px;width:61.5px;">17</span>
<span class="c cr" style="left:92px;top:435px;width:87.5px;">21,75</span>
<span class="c cr" style="left:28px;top:452px;width:61.5px;">18</span>
<span class="c cr" style="left:92px;top:452px;width:87.5px;">21,85</span>
<span class="c cr" style="left:28px;top:469px;width:61.5px;">19</span>
<span class="c cr" style="left:92px;top:469px;width:87.5px;">22,89</span>
<span class="c cr" style="left:28px;top:486px;width:61.5px;">20</span>
<span class="c cr" style="left:92px;top:486px;width:87.5px;">23,14</span>
<span class="c cr" style="left:28px;top:503px;width:61.5px;">21</span>
<span class="c cr" style="left:92px;top:503px;width:87.5px;">21,74</span>
<span class="c cr" style="left:28px;top:520px;width:61.5px;">22</span>
<span class="c cr" style="left:92px;top:520px;width:87.5px;">20,32</span>
<span class="c cr" style="left:245.5px;top:180px;width:62px;">23,95</span>
<span class="c cr" style="left:245.5px;top:197px;width:62px;">1,979902</span>
<span class="c cr" style="left:245.5px;top:350px;width:62px;">0,08267</span>
<svg style="left:0;top:0" width="800" height="600"><polygon points="302.5,180 308.5,180 308.5,186" fill="#ff0000"/><polygon points="302.5,197 308.5,197 308.5,203" fill="#ff0000"/><polygon points="302.5,350 308.5,350 308.5,356" fill="#ff0000"/><g stroke="#000" stroke-width="1" fill="none"><path d="M312,179.5 L323.5,168"/><path d="M311.5,203 L323,258"/><path d="M311,351 L324,340"/><path d="M322.5,246 L322.5,333" stroke-width="1.6"/></g><polygon points="308.8,182.8 315,176.8 316.5,182.3" fill="#000"/><polygon points="308.6,198.5 315,202 311,206.5" fill="#000"/><polygon points="308.8,352 315.5,345.5 317,351" fill="#000"/></svg>
<div style="left:244.5px;top:433.5px;width:66px;height:19px;border:2px solid #000"></div>
<div style="left:307.5px;top:449.5px;width:5px;height:5px;background:#000;border:1px solid #fff;border-right:0;border-bottom:0"></div>
<span class="c" style="left:249px;top:435px;">=</span>
<div class="dz" style="left:786px;top:113px;width:14px;height:425px;"></div>
<div class="rb" style="left:786px;top:113px;width:13px;height:6px;"></div>
<div class="rb" style="left:786px;top:119px;width:13px;height:13px;"></div>
<svg style="left:789px;top:123.5px" width="6.0" height="3.5"><polygon points="0,3.5 6.0,3.5 3.0,0" fill="#000"/></svg>
<div class="rb" style="left:786px;top:132px;width:13px;height:193px;"></div>
<div class="rb" style="left:786px;top:525px;width:13px;height:13px;"></div>
<svg style="left:789px;top:530px" width="6.0" height="3.5"><polygon points="0,0 6.0,0 3.0,3.5" fill="#000"/></svg>
<div style="left:799px;top:113px;width:1px;height:440px;background:#dfdfdf"></div>
<div style="left:0px;top:538px;width:800px;height:13px;background:#c0c0c0"></div>
<div style="left:1.5px;top:538px;width:476px;height:1px;background:#404040"></div>
<div style="left:2.0px;top:538px;width:11.7px;height:12px;background:#c0c0c0;border:1px solid;border-color:#fff #808080 #808080 #fff"></div>
<div style="left:13.7px;top:538px;width:11.7px;height:12px;background:#c0c0c0;border:1px solid;border-color:#fff #808080 #808080 #fff"></div>
<div style="left:25.4px;top:538px;width:11.7px;height:12px;background:#c0c0c0;border:1px solid;border-color:#fff #808080 #808080 #fff"></div>
<div style="left:37.099999999999994px;top:538px;width:11.7px;height:12px;background:#c0c0c0;border:1px solid;border-color:#fff #808080 #808080 #fff"></div>
<svg style="left:2px;top:538px" width="48" height="12"><g fill="#000"><rect x="2.5" y="3" width="1.6" height="6.5"/><polygon points="8.5,3 8.5,9.5 4.5,6.25"/><polygon points="20,3 20,9.5 15.5,6.25"/><polygon points="27.5,3 27.5,9.5 32,6.25"/><polygon points="38.5,3 38.5,9.5 42.5,6.25"/><rect x="43" y="3" width="1.6" height="6.5"/></g></svg>
<svg style="left:50px;top:538px" width="430" height="13"><polygon points="0,0 46,0 42,11.5 5,11.5" fill="#fff"/><path d="M0,0 L5,11.5 L42,11.5 L46,0" stroke="#000" stroke-width="1.2" fill="none"/><path d="M43.5,7 L45.5,11.5 L79,11.5 L83.5,0 M81,7 L83,11.5 L119,11.5 L123,0" stroke="#000" stroke-width="1.1" fill="none"/></svg>
<span class="t b" style="left:59px;top:537px;font-size:10px;letter-spacing:0.4px">Plan1</span>
<span class="t" style="left:99.5px;top:537px;font-size:10px;letter-spacing:-0.25px">Plan2</span>
<span class="t" style="left:138px;top:537px;font-size:10px;letter-spacing:-0.25px">Plan3</span>
<div style="left:0px;top:538px;width:2px;height:12px;background:#505050"></div>
<div class="rb" style="left:475px;top:538px;width:3px;height:13px;"></div>
<div class="dz" style="left:478px;top:538px;width:308px;height:13px;"></div>
<div class="rb" style="left:478px;top:538px;width:13px;height:13px;"></div>
<svg style="left:482px;top:541.5px" width="3" height="5"><polygon points="3,0 3,5 0,2.5" fill="#000"/></svg>
<div class="rb" style="left:491px;top:538px;width:251px;height:13px;"></div>
<div class="rb" style="left:769px;top:538px;width:13px;height:13px;"></div>
<svg style="left:774px;top:541.5px" width="3" height="5"><polygon points="0,0 0,5 3,2.5" fill="#000"/></svg>
<div class="rb" style="left:782px;top:538px;width:3px;height:13px;"></div>
<div style="left:786px;top:538px;width:14px;height:13px;background:#c0c0c0;border-top:2px solid #000;border-left:2px solid #000"></div>
<div style="left:0px;top:551px;width:800px;height:1px;background:#fff"></div>
<span class="t" style="left:7px;top:555px;font-size:12px;line-height:15px;height:15px">Edita</span>
<div style="left:428px;top:553px;width:2px;height:18px;background:#808080;border-right:1px solid #fff"></div>
<div class="sk1" style="left:436px;top:554px;width:33px;height:16px;"></div>
<div class="sk1" style="left:472px;top:554px;width:130px;height:16px;"></div>
<div class="sk1" style="left:604px;top:554px;width:32px;height:16px;"></div>
<div class="sk1" style="left:638px;top:554px;width:35px;height:16px;"></div>
<div class="sk1" style="left:675px;top:554px;width:31px;height:16px;"></div>
<div class="sk1" style="left:708px;top:554px;width:33px;height:16px;"></div>
<div class="sk1" style="left:743px;top:554px;width:26px;height:16px;"></div>
<div class="sk1" style="left:771px;top:554px;width:23px;height:16px;"></div>
<span class="t" style="left:678px;top:556px;font-size:11.5px">NÚM</span>
<div style="left:0px;top:571px;width:800px;height:1px;background:#dfdfdf"></div>
<div style="left:0px;top:572px;width:800px;height:1px;background:#fff"></div>
<div class="rb" style="left:2px;top:574.5px;width:62px;height:22px;"></div>
<svg style="left:5px;top:577.5px" width="18" height="16" viewBox="0 0 18 16"><path d="M6,2.2 Q9,0.5 11.5,2.2 Q14,4 17,2.2 L16,13 Q13,15 10.5,13.2 Q8,11.5 5,13.2 Z" stroke="#000" stroke-width="1" fill="#000" /><path d="M7.2,3.6 Q9,2.6 10.4,3.6 L10,7 Q8.6,6.2 6.9,7 Z" stroke="none" stroke-width="0" fill="#ff2020" /><path d="M11.8,4.3 Q13.6,5.2 15.5,4.3 L15.2,7.8 Q13.4,8.8 11.5,7.8 Z" stroke="none" stroke-width="0" fill="#20d020" /><path d="M6.8,8.4 Q8.5,7.6 9.9,8.4 L9.6,11.6 Q8.2,10.8 6.5,11.6 Z" stroke="none" stroke-width="0" fill="#2020ff" /><path d="M11.3,9.1 Q13.2,10.1 15,9.1 L14.7,12.3 Q12.9,13.3 11,12.3 Z" stroke="none" stroke-width="0" fill="#ffff20" /><path d="M1,4 H5.5 M2,6 H5.3" stroke="#e02020" stroke-width="1.1" fill="none" /><path d="M0.5,8 H5 M1.5,10 H4.8" stroke="#404040" stroke-width="1.1" fill="none" /><path d="M0.5,12 H4.6 M1.5,13.8 H4.5" stroke="#2020e0" stroke-width="1.1" fill="none" /></svg>
<span class="t b" style="left:24px;top:579.5px;letter-spacing:0.3px">Iniciar</span>
<div style="left:65.5px;top:574.5px;width:2.5px;height:22px;background:#808080;border-right:1px solid #fff"></div>
<div class="gr" style="left:69.5px;top:576px;width:3.5px;height:18px;border-left:1px solid #fff;border-right:1px solid #808080"></div>
<div class="rb" style="left:78px;top:574.5px;width:159px;height:22px;"></div>
<svg style="left:80px;top:577.5px" width="16" height="16" viewBox="0 0 16 16"><path d="M1.5,12.5 L1.5,3.5 L2.5,2.5 L5.5,2.5 L6.5,3.5 L13.5,3.5 L13.5,12.5 Z" stroke="#504000" stroke-width="1" fill="#ffff80" /><circle cx="7.5" cy="8" r="3.3" fill="#c0ffff" stroke="#000"/><path d="M10,10.5 L14.5,15" stroke="#0000c0" stroke-width="2.2" fill="none" /></svg>
<span class="t" style="left:99px;top:579.5px;font-size:11.5px;transform:scaleX(.925);transform-origin:0 0">Explorando - EST_UNIDA...</span>
<div class="rb" style="left:240px;top:574.5px;width:159px;height:22px;"></div>
<svg style="left:243px;top:577.5px" width="16" height="16" viewBox="0 0 16 16"><text x="-0.5" y="14" font-family="Liberation Serif,sans-serif" font-size="16.5" font-weight="bold" fill="#00e8e8" font-style="italic" stroke="#002050" stroke-width="0.9" textLength="16.5" lengthAdjust="spacingAndGlyphs">W</text></svg>
<span class="t" style="left:263px;top:579.5px;font-size:11.5px;transform:scaleX(.925);transform-origin:0 0">Microsoft Word - Estatístic...</span>
<div class="pr dz" style="left:402px;top:574.5px;width:159px;height:22px;"></div>
<svg style="left:407px;top:578.5px" width="16" height="16" viewBox="0 0 16 16"><path d="M12,2.5 L16,2.5 Q9,8 5,13.5 L0.5,13.5 Q7,8 12,2.5 Z" stroke="#000" stroke-width="0.8" fill="#009090" /><path d="M0.5,2.5 L5,2.5 Q9,8 16,13.5 L11.5,13.5 Q6,8 0.5,2.5 Z" stroke="#000" stroke-width="0.8" fill="#00d8d8" /><path d="M2.5,3.3 Q7,8 12.5,12.6" stroke="#c0ffff" stroke-width="0.9" fill="none" /><path d="M1,14.3 L16,14.3" stroke="#000" stroke-width="1.2" fill="none" /></svg>
<span class="t b" style="left:426px;top:580.5px;font-size:11.5px;letter-spacing:0.1px">Microsoft Excel - mód...</span>
<div class="sk1" style="left:669px;top:574.5px;width:128px;height:22px;"></div>
<svg style="left:671px;top:577.5px" width="16" height="16" viewBox="0 0 16 16"><path d="M2,6 L5,6 L9.5,2 L9.5,14 L5,10 L2,10 Z" stroke="#000" stroke-width="0.8" fill="#ffff00" /><path d="M11.5,5 V11 M13,6.5 V9.5" stroke="#808080" stroke-width="1" fill="none" /></svg>
<svg style="left:688px;top:577.5px" width="16" height="16" viewBox="0 0 16 16"><rect x="0" y="0" width="16" height="16" fill="#000080"/><text x="2" y="12" font-family="Liberation Sans,sans-serif" font-size="11" font-weight="normal" fill="#fff" >Pt</text></svg>
<svg style="left:706px;top:577.5px" width="16" height="16" viewBox="0 0 16 16"><path d="M2,2 L8,1 L14,2 L14,8 Q13,13 8,15.5 Q3,13 2,8 Z" stroke="#0000c0" stroke-width="1.2" fill="#fff" /><path d="M4.5,4 L8,12 L11.5,4" stroke="#e00000" stroke-width="2" fill="none" /></svg>
<svg style="left:722px;top:577.5px" width="16" height="16" viewBox="0 0 16 16"><rect x="0.5" y="1.5" width="15" height="9" fill="#000080"/><rect x="1" y="10.5" width="14" height="4" fill="#e00000"/><path d="M3,6 L8,3 L8,5 L13,5 L13,8 L8,8 L8,10 Z" stroke="none" stroke-width="0" fill="#ffff00" /><path d="M10,2 H15 M10,4 H15" stroke="#fff" stroke-width="0.8" fill="none" /></svg>
<svg style="left:739px;top:577.5px" width="16" height="16" viewBox="0 0 16 16"><ellipse cx="8" cy="8" rx="7.5" ry="5.5" fill="#0000e0"/><circle cx="8" cy="8" r="3" fill="#fff"/><polygon points="7,5.5 10.5,8 7,10.5" fill="#0000e0"/><path d="M2,13 L1,15.5 L5,13.5" stroke="#0000e0" stroke-width="1.2" fill="#0000e0" /></svg>
<span class="t" style="left:763px;top:579.5px;">10:47</span>
<div style="left:323px;top:428px;width:326px;height:3px;background:#000"></div>
<div style="left:323px;top:134px;width:440px;height:295px;background:#c0c0c0;border:1px solid;border-color:#dfdfdf #000 #000 #dfdfdf;box-shadow:inset -1px -1px #808080,inset 1px 1px #fff"><div style="left:-1px;top:-1px;width:0;height:0"><div style="left:3px;top:3px;width:434px;height:18px;background:#000080"></div><span class="t b" style="left:6px;top:6px;color:#fff;font-size:11.5px">Colar função</span><div class="rb" style="left:401px;top:5px;width:16px;height:14px;"><span class="t b" style="left:3px;top:-0.5px;font-size:12px;-webkit-text-stroke:0.3px #000">?</span></div><div class="rb" style="left:419px;top:5px;width:16px;height:14px;"><svg style="left:3px;top:2px" width="8" height="7"><path d="M0,0 L8,7 M8,0 L0,7" stroke="#000" stroke-width="1.5" fill="none"/></svg></div><span class="t" style="left:9px;top:32.5px;font-size:11.5px;transform:scaleX(.946);transform-origin:0 0"><u>C</u>ategoria da função:</span><span class="t" style="left:209px;top:32.5px;font-size:11.5px;transform:scaleX(.946);transform-origin:0 0"><u>N</u>ome da função:</span><div class="sk" style="left:9px;top:49px;width:191px;height:146px;background:#fff"><div class="li" style="top:1px;width:174px"><span style="left:1px;top:0;transform:scaleX(0.918);transform-origin:0 0">Mais recentemente usada</span></div><div class="li" style="top:14px;width:174px"><span style="left:1px;top:0;transform:scaleX(0.918);transform-origin:0 0">Todas</span></div><div class="li" style="top:27px;width:174px"><span style="left:1px;top:0;transform:scaleX(0.918);transform-origin:0 0">Financeira</span></div><div class="li" style="top:40px;width:174px"><span style="left:1px;top:0;transform:scaleX(0.918);transform-origin:0 0">Data e hora</span></div><div class="li" style="top:53px;width:174px"><span style="left:1px;top:0;transform:scaleX(0.918);transform-origin:0 0">Matemática e trigonométrica</span></div><div class="li sel" style="top:66px;width:174px;"><span style="left:1px;top:0;transform:scaleX(0.918);transform-origin:0 0">Estatística</span></div><div class="li" style="top:79px;width:174px"><span style="left:1px;top:0;transform:scaleX(0.918);transform-origin:0 0">Procura e referência</span></div><div class="li" style="top:92px;width:174px"><span style="left:1px;top:0;transform:scaleX(0.918);transform-origin:0 0">Banco de dados</span></div><div class="li" style="top:105px;width:174px"><span style="left:1px;top:0;transform:scaleX(0.918);transform-origin:0 0">Texto</span></div><div class="li" style="top:118px;width:174px"><span style="left:1px;top:0;transform:scaleX(0.918);transform-origin:0 0">Lógica</span></div><div class="li" style="top:131px;width:174px"><span style="left:1px;top:0;transform:scaleX(0.918);transform-origin:0 0">Informações</span></div><div class="dz" style="left:175px;top:1px;width:13px;height:142px;"></div><div class="rb" style="left:175px;top:1px;width:13px;height:13px;"></div><svg style="left:178px;top:5px" width="6.0" height="3.5"><polygon points="0,3.5 6.0,3.5 3.0,0" fill="#000"/></svg><div class="rb" style="left:175px;top:130px;width:13px;height:13px;"></div><svg style="left:178px;top:135px" width="6.0" height="3.5"><polygon points="0,0 6.0,0 3.0,3.5" fill="#000"/></svg><div class="rb" style="left:175px;top:14px;width:13px;height:99.5px;"></div></div><div class="sk" style="left:209px;top:49px;width:219px;height:146px;background:#fff"><div class="li" style="top:1px;width:202px"><span style="left:1px;top:0;transform:scaleX(0.875);transform-origin:0 0">MÉDIA.GEOMÉTRICA</span></div><div class="li" style="top:14px;width:202px"><span style="left:1px;top:0;transform:scaleX(0.875);transform-origin:0 0">MÉDIA.HARMÔNICA</span></div><div class="li" style="top:27px;width:202px"><span style="left:1px;top:0;transform:scaleX(0.875);transform-origin:0 0">MÉDIA.INTERNA</span></div><div class="li" style="top:40px;width:202px"><span style="left:1px;top:0;transform:scaleX(0.875);transform-origin:0 0">MÉDIAA</span></div><div class="li" style="top:53px;width:202px"><span style="left:1px;top:0;transform:scaleX(0.875);transform-origin:0 0">MENOR</span></div><div class="li" style="top:66px;width:202px"><span style="left:1px;top:0;transform:scaleX(0.875);transform-origin:0 0">MÍNIMO</span></div><div class="li" style="top:79px;width:202px"><span style="left:1px;top:0;transform:scaleX(0.875);transform-origin:0 0">MÍNIMOA</span></div><div class="li sel" style="top:92px;width:202px;outline:1px dotted #ffff80;outline-offset:-1px;"><span style="left:1px;top:0;transform:scaleX(0.875);transform-origin:0 0">MODO</span></div><div class="li" style="top:105px;width:202px"><span style="left:1px;top:0;transform:scaleX(0.875);transform-origin:0 0">ORDEM</span></div><div class="li" style="top:118px;width:202px"><span style="left:1px;top:0;transform:scaleX(0.875);transform-origin:0 0">ORDEM.PORCENTUAL</span></div><div class="li" style="top:131px;width:202px"><span style="left:1px;top:0;transform:scaleX(0.875);transform-origin:0 0">PADRONIZAR</span></div><div class="dz" style="left:203px;top:1px;width:13px;height:142px;"></div><div class="rb" style="left:203px;top:1px;width:13px;height:13px;"></div><svg style="left:206px;top:5px" width="6.0" height="3.5"><polygon points="0,3.5 6.0,3.5 3.0,0" fill="#000"/></svg><div class="rb" style="left:203px;top:130px;width:13px;height:13px;"></div><svg style="left:206px;top:135px" width="6.0" height="3.5"><polygon points="0,0 6.0,0 3.0,3.5" fill="#000"/></svg><div class="rb" style="left:203px;top:86px;width:13px;height:15.5px;"></div></div><span class="t b" style="left:8px;top:199px;font-size:11.5px">MODO(núm1;núm2;...)</span><span class="t" style="left:9px;top:217.5px;font-size:11.5px;transform:scaleX(.931);transform-origin:0 0">Retorna o valor mais repetido ou que ocorre com maior freqüência, em uma matriz ou</span><span class="t" style="left:9px;top:230.5px;font-size:11.5px;transform:scaleX(.931);transform-origin:0 0">intervalo de dados.</span><div class="rb" style="left:9px;top:266px;width:24px;height:23px;"><svg style="left:3px;top:2px" width="16" height="16" viewBox="0 0 16 16"><rect x="2" y="1" width="12" height="11.5" rx="2.2" fill="#ffffb0" stroke="#000" stroke-width="1.3"/><path d="M9,12.5 L12.5,15.5 L11.5,12.5" stroke="#000" stroke-width="1" fill="#ffffb0" /><text x="4.6" y="10.8" font-family="Liberation Sans,sans-serif" font-size="11.5" font-weight="bold" fill="#000090" stroke="#000090" stroke-width="0.5">?</text></svg></div><div style="left:276px;top:267px;width:74px;height:22px;border:1px solid #000"><div class="rb" style="left:0px;top:0px;width:72px;height:20px;"><span class="t" style="left:0;top:2.5px;width:70px;text-align:center;font-size:11.5px;transform:scaleX(.9)">OK</span></div></div><div class="rb" style="left:357px;top:267px;width:74px;height:22px;"><span class="t" style="left:0;top:3.5px;width:72px;text-align:center;font-size:11.5px;transform:scaleX(.91)">Cancelar</span></div></div></div>
</div>
</body></html>
